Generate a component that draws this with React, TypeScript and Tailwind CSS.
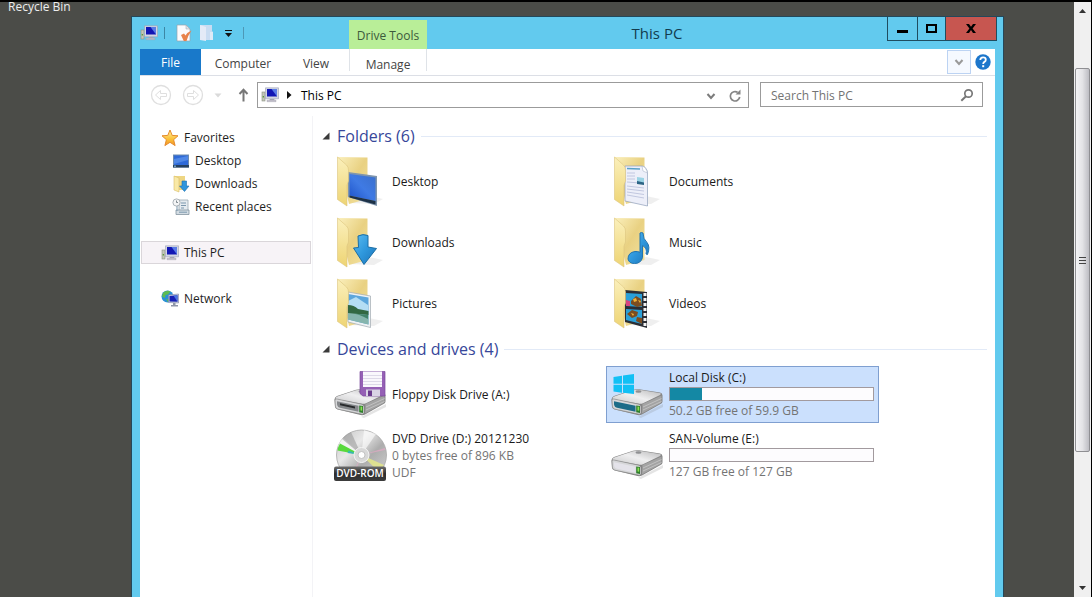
import type { ReactNode } from "react";

type IconName =
  | "desktop"
  | "documents"
  | "downloads"
  | "music"
  | "pictures"
  | "videos"
  | "floppy"
  | "dvd"
  | "system"
  | "disk";

interface Item {
  name: string;
  icon: IconName;
  lines?: string[];
  used?: number;
  selected?: boolean;
}

const folders: Item[] = [
  { name: "Desktop", icon: "desktop" },
  { name: "Documents", icon: "documents" },
  { name: "Downloads", icon: "downloads" },
  { name: "Music", icon: "music" },
  { name: "Pictures", icon: "pictures" },
  { name: "Videos", icon: "videos" },
];

const drives: Item[] = [
  { name: "Floppy Disk Drive (A:)", icon: "floppy" },
  { name: "Local Disk (C:)", icon: "system", used: 16, lines: ["50.2 GB free of 59.9 GB"], selected: true },
  { name: "DVD Drive (D:) 20121230", icon: "dvd", lines: ["0 bytes free of 896 KB", "UDF"] },
  { name: "SAN-Volume (E:)", icon: "disk", used: 0, lines: ["127 GB free of 127 GB"] },
];

function PcIcon() {
  return (
    <svg width="18" height="16" viewBox="0 0 18 16" className="shrink-0" aria-hidden="true">
      <rect x="1" y="5" width="3" height="9" fill="#c3c6b8" stroke="#8b9082" strokeWidth=".6" />
      <rect x="1.7" y="9" width="1.3" height="1.5" fill="#5c9a3e" />
      <path d="M4.500.800h13v11h-13z" fill="#d3d6e2" stroke="#9a9fb4" strokeWidth=".6" />
      <path d="M6 2h10v7.500H6z" fill="#1216b4" />
      <path d="M10.500 2H16v7.500z" fill="#5a7be6" />
      <path d="M9 12h4l1 1.500H8z" fill="#a4a8b5" />
      <path d="M6 13.200h9v1.500H6z" fill="#c7c4cf" stroke="#9a98a6" strokeWidth=".4" />
    </svg>
  );
}

function StarIcon() {
  return (
    <svg width="18" height="18" viewBox="0 0 18 18" className="shrink-0" aria-hidden="true">
      <defs>
        <linearGradient id="star" x1="0" y1="0" x2="0" y2="1">
          <stop offset="0" stopColor="#fff3a0" />
          <stop offset=".6" stopColor="#fbbf35" />
          <stop offset="1" stopColor="#f0912a" />
        </linearGradient>
      </defs>
      <path
        d="M9 1l2.200 5.400 5.800.4-4.400 3.900 1.500 5.900L9 13.300l-5.100 3.300 1.500-5.900L1 6.800l5.800-.4z"
        fill="url(#star)"
        stroke="#e58b2c"
        strokeWidth="1"
        strokeLinejoin="round"
      />
    </svg>
  );
}

function DesktopSmallIcon() {
  return (
    <svg width="18" height="16" viewBox="0 0 18 16" className="shrink-0" aria-hidden="true">
      <rect x="1" y="1.500" width="16" height="13" fill="#6d8bb0" />
      <rect x="2" y="2.500" width="14" height="9.500" fill="#2f6ad8" />
      <path d="M2 11V6l14-3v4z" fill="#5088e6" />
      <rect x="1" y="12" width="16" height="2.500" fill="#26415f" />
      <rect x="2" y="12.600" width="2" height="1.200" fill="#7fb0d8" />
    </svg>
  );
}

function DownloadsSmallIcon() {
  return (
    <svg width="18" height="18" viewBox="0 0 18 18" className="shrink-0" aria-hidden="true">
      <path d="M2 1h11v14H6z" fill="#eed683" />
      <path d="M2 1l5 2v14l-5-2z" fill="#f9e9a6" stroke="#d9bd68" strokeWidth=".6" />
      <path d="M10 6h4.500v5H17l-4.500 5.500L7.500 11H10z" fill="#2f96dc" stroke="#1a6fae" strokeWidth=".6" />
    </svg>
  );
}

function RecentIcon() {
  return (
    <svg width="18" height="18" viewBox="0 0 18 18" className="shrink-0" aria-hidden="true">
      <path d="M7 2h9v11H7z" fill="#e5ebf0" stroke="#9aa8b3" strokeWidth=".8" />
      <path d="M4 12h13v4.500H4z" fill="#d3dce3" stroke="#8494a1" strokeWidth=".8" />
      <path d="M5 6v7M9 5h5M9 7.500h5M9 10h3M7 14.200h8" stroke="#7b97ad" strokeWidth="1" />
      <circle cx="4.500" cy="4.500" r="3.600" fill="#f4f5f6" stroke="#9aa3aa" strokeWidth=".8" />
      <path d="M4.500 2.500v2h1.500" fill="none" stroke="#65717a" strokeWidth=".8" />
    </svg>
  );
}

function NetworkIcon() {
  return (
    <svg width="18" height="18" viewBox="0 0 18 18" className="shrink-0" aria-hidden="true">
      <circle cx="6.500" cy="6.500" r="6" fill="#2a90d6" />
      <path d="M2 3C4 .5 8 .3 9.500 1.500L7 4.500 4.500 5 4 8 1 6.500zM5 9l3 .5-1 2.800z" fill="#5dbb52" />
      <path d="M7.500 5l10-1v9l-10-.5z" fill="#c9cfdf" stroke="#7c85a5" strokeWidth=".6" />
      <path d="M8.500 6l8-.8v6.600l-8-.3z" fill="#1720b4" />
      <path d="M12.500 5.600l4-.4v6.600z" fill="#4a75e0" />
      <path d="M12 13h2.500v2H17v1.500h-7V15h2z" fill="#8f96a8" />
    </svg>
  );
}

function FolderIcon({ children }: { children: ReactNode }) {
  return (
    <>
      <path d="M16 49l24 1 9-5-14-3z" fill="#8c8c8c" opacity=".14" />
      <path d="M3.500 3L33.500 3.500V45L15 50z" fill="url(#folder-back)" />
      {children}
      <path d="M3.500 3L12.500 11q2 2 2 5v11l-1.500 4v21L3.500 45.500z" fill="url(#folder-front)" stroke="#dcc57e" strokeWidth=".6" />
    </>
  );
}

function DriveBody({ face }: { face: string }) {
  return (
    <>
      <path d="M4 42l23 8 25-13v3L30 51z" fill="#777" opacity=".2" />
      <path d="M.500 32.500Q.500 30 3 29L22 22.800q3-1 6-.5L49 25.500q2.500.5 2.500 3v6q0 1.500-2 2.500L31 47.500q-2 1-4.500.5L4 42.500q-3-.8-3-3.500z" fill="#858585" />
      <path d="M1.500 31Q2 29.800 4 29.200L22 23.300q3-1 6-.5l20.500 3.300q2.500.5.500 1.800L32 36.200q-2 1-5 .4L3 32.200q-1.800-.4-1.500-1.200z" fill="url(#metal)" />
      <path d="M31.500 37l19-8.500v6q0 1-1.500 2L31 46.500z" fill="#a3a3a3" />
      <path d="M32 40l18.500-8.500M32 43l18.500-8.500" stroke="#c9c9c9" strokeWidth=".8" />
      <path d="M1 33q0-1.500 2-1l24.500 5.200q2.500.6 2.500 2.600v6q0 1.800-2.500 1.300L4 42.200q-2.500-.6-2.700-3z" fill="#d6d7d9" stroke="#858585" strokeWidth=".6" />
      <path d="M3 34.200l21.500 4.500v6L6 40.800q-3-.8-3-4z" fill={face} />
      <path d="M25.200 38.500l3.800.6v7l-3.800-.8z" fill="#2f7d2c" />
      <path d="M26.500 39.500l1.700.3v4l-1.700-.3z" fill="#8be052" />
      <ellipse cx="27.500" cy="24.500" rx="3" ry="1.200" fill="#8f9092" />
    </>
  );
}

function Artwork({ icon }: { icon: IconName }) {
  switch (icon) {
    case "desktop":
      return (
        <FolderIcon>
          <path d="M14 18l29 4v30L14 43z" fill="#7f95ad" />
          <path d="M15.500 20l26 3.500V47l-26-5.500z" fill="url(#screen)" />
          <path d="M15.500 41.500l26 5.500v3.500l-26-7z" fill="#1d3147" />
        </FolderIcon>
      );
    case "documents":
      return (
        <FolderIcon>
          <path d="M14 12h17q5 1 5.500 7v33L14 47z" fill="#edeff9" stroke="#8f9fba" strokeWidth=".7" />
          <path d="M31 12q4 1 5.500 7l-4.500-2z" fill="#fff" stroke="#9fabc2" strokeWidth=".5" />
          <path d="M16 14.500l13 .5" stroke="#58a0c8" strokeWidth="1.400" />
          <path d="M16 19h8M16 22h8M16 25h8M16 28l10 .8M16 32l17 2M16 35l17 2M16 38l17 2.500M16 41l17 3" stroke="#bcc3dc" strokeWidth=".9" />
          <path d="M26 23l7 1v6l-7-1z" fill="#9bd3e4" />
          <path d="M26 27l7 1.500V31l-7-1z" fill="#2c6485" />
        </FolderIcon>
      );
    case "downloads":
      return (
        <>
          <FolderIcon>{null}</FolderIcon>
          <path
            d="M24 21q5-2.500 10-.5v11.500l8.500 1.500L30 49.500 19.500 33l5-.5z"
            fill="url(#arrow)"
            stroke="#1a6da4"
            strokeWidth="1"
            strokeLinejoin="round"
          />
        </>
      );
    case "music":
      return (
        <>
          <FolderIcon>{null}</FolderIcon>
          <path
            d="M29 18q1.500-1 3 0 0 6 4 9.500 3.500 4 .5 12l-1.500-.5q1.500-6-3.500-8.500v12q-1.500 6-8 6-5.500 0-6.500-4.500 0-6.500 7-7.500 3-.2 5 .8z"
            fill="url(#arrow)"
            stroke="#2374ae"
            strokeWidth="1"
          />
        </>
      );
    case "pictures":
      return (
        <FolderIcon>
          <path d="M14 16l22.500 4v31.500L14 46z" fill="#eef2f4" stroke="#a0a9b0" strokeWidth=".7" />
          <path d="M14 18l20.500 3.500v27L14 43.500z" fill="#5ca6dc" />
          <path d="M14 25l8-4 12 8v7l-20 2z" fill="#b4ddf4" />
          <path d="M14 29q6 0 10 4l10.500 2v4L14 38z" fill="#326842" />
          <path d="M14 37l20.500 2v9.500l-20.500-5z" fill="#86b5ad" />
          <path d="M14 37q10 0 20 6v-4z" fill="#41836a" />
        </FolderIcon>
      );
    case "videos":
      return (
        <FolderIcon>
          <path d="M14 14l22 2v36L14 46z" fill="#2b2e35" />
          <path d="M15 17l16 1v13l-16-1zM15 33l16 1v14l-16-4z" fill="#2aa0d8" />
          <path d="M15 24l4 1v5h-4z" fill="#d64580" />
          <path d="M20 25l5-5 5 3 1 7-5 1-6-3zM16 38l5-4 6 2-1 4-5 2zM26 41l5 1v6l-6-3z" fill="#7c4d20" />
          <path d="M22 23l3-1 1 3-3 1zM20 37l3 1-1 2zM27 24l3 1-1 2z" fill="#f0b338" />
          <path d="M34 17v34" stroke="#f2f2f2" strokeWidth="3" strokeDasharray="3 2" />
        </FolderIcon>
      );
    case "floppy":
      return (
        <>
          <DriveBody face="#85888b" />
          <path d="M6 36.300l15 3.200v2L6 38.300z" fill="#292b2d" />
          <path d="M26 4.500h25V29H29l-3-2.500z" fill="#9560b5" stroke="#7a479c" strokeWidth=".7" />
          <path d="M29 4.500h19v15.500H29z" fill="#f9f7fc" />
          <path d="M29 8.500h19M29 11.500h19M29 14.500h19M29 17.500h19" stroke="#d6d0e2" strokeWidth=".8" />
          <path d="M32 22.500h14V29H32z" fill="#d9d4e4" />
          <path d="M34 23.500h4V29h-4z" fill="#6b3c8d" />
        </>
      );
    case "dvd":
      return (
        <>
          <circle cx="27.500" cy="27" r="25" fill="url(#disc)" stroke="#a8a8a8" strokeWidth=".8" />
          <path d="M27.500 27L4 19q1-5 5-9z" fill="#f3f3f3" />
          <path d="M27.500 27L3.500 22.500q.5-4 2.500-7z" fill="#58d93c" />
          <path d="M27.500 27l-13-4.500-1 2.500z" fill="#35b9b0" />
          <path d="M27.500 27L8 11q4-5 9-7z" fill="#8e8e8e" opacity=".5" />
          <path d="M27.500 27L45 44l5-7z" fill="#e4e88a" opacity=".85" />
          <path d="M27.500 27L51 20v2zM27.500 27L17 49l2 1z" fill="#e2a8c4" opacity=".7" />
          <path d="M27.500 27L30 2l12 4z" fill="#fff" opacity=".6" />
          <circle cx="27.500" cy="27" r="7.500" fill="#d8d8d8" stroke="#f5f5f5" strokeWidth="1" />
          <circle cx="27.500" cy="27" r="3.500" fill="#fff" stroke="#b6b6b6" strokeWidth=".8" />
          <rect x="0" y="38.500" width="52" height="14.500" rx="2" fill="url(#dvd-label)" />
          <text x="26" y="49" textAnchor="middle" fill="#fff" fontSize="10" fontWeight="600" fontFamily="Open Sans, sans-serif">
            DVD-ROM
          </text>
        </>
      );
    case "system":
      return (
        <>
          <DriveBody face="#1c6c88" />
          <path d="M2.500 10l8.500-1.300v8H2.500zM12 8.500l11-1.500v9.700H12zM2.500 17.700H11v8l-8.500-1.300zM12 17.700h11V27l-11-1.300z" fill="#12c0f5" />
        </>
      );
    case "disk":
      return <DriveBody face="#e4e3ea" />;
  }
}

function ItemIcon({ icon }: { icon: IconName }) {
  return (
    <svg width="54" height="55" viewBox="0 0 54 55" className="shrink-0" aria-hidden="true">
      <Artwork icon={icon} />
    </svg>
  );
}

// gradients shared by every large icon
function IconDefs() {
  return (
    <svg width="0" height="0" className="absolute" aria-hidden="true">
      <defs>
        <linearGradient id="folder-back" x1="0" y1="0" x2="1" y2="1">
          <stop offset="0" stopColor="#fbf0bd" />
          <stop offset=".5" stopColor="#e9d182" />
          <stop offset="1" stopColor="#f3e2a0" />
        </linearGradient>
        <linearGradient id="folder-front" x1="0" y1="0" x2="0" y2="1">
          <stop offset="0" stopColor="#fbf0bc" />
          <stop offset="1" stopColor="#eed473" />
        </linearGradient>
        <linearGradient id="screen" x1="0" y1="1" x2="1" y2="0">
          <stop offset="0" stopColor="#1c51c8" />
          <stop offset=".5" stopColor="#3f7ae4" />
          <stop offset="1" stopColor="#3a6fcb" />
        </linearGradient>
        <linearGradient id="arrow" x1="0" y1="0" x2="1" y2="1">
          <stop offset="0" stopColor="#5cbdf0" />
          <stop offset=".5" stopColor="#2f98dd" />
          <stop offset="1" stopColor="#1b73b8" />
        </linearGradient>
        <linearGradient id="metal" x1="0" y1="1" x2="1" y2="0">
          <stop offset="0" stopColor="#c9c9ca" />
          <stop offset=".5" stopColor="#efeff0" />
          <stop offset="1" stopColor="#b8b8b9" />
        </linearGradient>
        <linearGradient id="disc" x1="0" y1="0" x2="1" y2="1">
          <stop offset="0" stopColor="#c2c2c2" />
          <stop offset=".35" stopColor="#e8e8e8" />
          <stop offset=".6" stopColor="#adadad" />
          <stop offset="1" stopColor="#d5d5d5" />
        </linearGradient>
        <linearGradient id="dvd-label" x1="0" y1="0" x2="0" y2="1">
          <stop offset="0" stopColor="#6d6d6d" />
          <stop offset=".5" stopColor="#2d2d2d" />
          <stop offset="1" stopColor="#3c3c3c" />
        </linearGradient>
      </defs>
    </svg>
  );
}

function TitleBar() {
  return (
    <header className="flex h-8 items-start bg-[#62caee] pr-[6px] pl-2">
      <div className="flex h-8 w-[209px] items-center">
        <PcIcon />
        <span className="ml-[6px] h-3 w-px bg-[#3c87a5]" />
        <button type="button" aria-label="Properties" className="ml-[10px]">
          <svg width="18" height="18" viewBox="0 0 18 18" aria-hidden="true">
            <path d="M2 1h9l4 4v12H2z" fill="#fbfbfd" stroke="#9aa3ad" strokeWidth=".7" />
            <path d="M11 1v4h4z" fill="#dfe5ea" stroke="#9aa3ad" strokeWidth=".5" />
            <path d="M6 11l3-1.500 1.500 2Q12 8.500 16.500 6.500q-3.500 5-5 10.500H8.800z" fill="#e8834c" />
          </svg>
        </button>
        <button type="button" aria-label="New folder" className="ml-[6px]">
          <svg width="16" height="18" viewBox="0 0 16 18" aria-hidden="true">
            <path d="M1 1h12v6l1 1v8H1z" fill="#c9dcf2" />
            <path d="M1 1l6 2v14l-6-1z" fill="#e4eaf7" />
            <path d="M11 8h3v8h-3z" fill="#dfeaf6" />
          </svg>
        </button>
        <button type="button" aria-label="Customize Quick Access Toolbar" className="ml-[9px] pt-px">
          <svg width="9" height="8" viewBox="0 0 9 8" aria-hidden="true">
            <path d="M1 0h7v1H1zM1 3h7L4.500 7z" fill="#111" />
          </svg>
        </button>
        <span className="ml-[10px] h-3 w-px bg-[#4d98b6]" />
      </div>
      <div className="mt-[3px] flex h-[29px] w-[78px] items-center justify-center bg-[#b9ee98] pt-0.5 text-[#3c5a3c]">
        Drive Tools
      </div>
      <h1 className="flex-1 pt-1 text-center text-[15px] leading-6 text-[#123c4e]">This PC</h1>
      <div className="flex h-6 border-x border-b border-[#1f4d60]">
        <button type="button" aria-label="Minimize" className="flex w-[30px] items-center justify-center border-r border-[#1f4d60]">
          <svg width="11" height="12" viewBox="0 0 11 12" aria-hidden="true">
            <path d="M0 7h11v3H0z" fill="#000" />
          </svg>
        </button>
        <button type="button" aria-label="Maximize" className="flex w-7 items-center justify-center border-r border-[#1f4d60]">
          <svg width="11" height="10" viewBox="0 0 11 10" aria-hidden="true">
            <path d="M1 1h9v7H1z" fill="none" stroke="#000" strokeWidth="2" />
          </svg>
        </button>
        <button type="button" aria-label="Close" className="flex w-[50px] items-center justify-center bg-[#c75650]">
          <svg width="10" height="10" viewBox="0 0 10 10" aria-hidden="true">
            <path d="M0 0h3l2 2.800L7 0h3L6.600 4.400 10 9H7L5 6.100 3 9H0l3.400-4.600z" fill="#000" />
          </svg>
        </button>
      </div>
    </header>
  );
}

function Ribbon() {
  return (
    <div className="flex h-[27px] border-b border-[#dcdfe6] bg-white pr-1 text-[#444]">
      <button type="button" className="h-[26px] w-[61px] bg-[#1979ca] pt-0.5 text-white">
        File
      </button>
      <button type="button" className="w-[84px] pt-1">
        Computer
      </button>
      <button type="button" className="w-[62px] pt-1">
        View
      </button>
      <button type="button" className="mr-auto ml-0.5 h-[22px] w-[78px] border-x border-[#dfe3e8] pt-2">
        Manage
      </button>
      <button type="button" aria-label="Expand the Ribbon" className="mt-px flex h-6 w-6 items-center justify-center border border-[#bcd3f3] bg-[#f5f9ff]">
        <Chevron color="#9a9a9a" />
      </button>
      <button type="button" aria-label="Help" className="ml-1 flex h-[25px] items-center">
        <svg width="16" height="16" viewBox="0 0 16 16" aria-hidden="true">
          <circle cx="8" cy="8" r="7.700" fill="#1c76cb" />
          <path d="M5.300 6q0-2.600 2.800-2.600 2.700 0 2.700 2.300 0 1.300-1.400 2.200-1.200.7-1.200 2" fill="none" stroke="#fff" strokeWidth="1.800" />
          <rect x="7.200" y="11.200" width="2" height="2" fill="#fff" />
        </svg>
      </button>
    </div>
  );
}

function Chevron({ color }: { color: string }) {
  return (
    <svg width="10" height="8" viewBox="0 0 10 8" aria-hidden="true">
      <path d="M1.500 2L5 6l3.500-4" fill="none" stroke={color} strokeWidth="2" />
    </svg>
  );
}

function AddressBar() {
  return (
    <div className="flex h-10 items-start bg-white pt-[6px] pr-3 pl-[10px]">
      <div className="flex h-[26px] w-[107px] items-center">
        <button type="button" aria-label="Back">
          <svg width="22" height="22" viewBox="0 0 22 22" fill="none" stroke="#dfdfdf" aria-hidden="true">
            <circle cx="11" cy="11" r="9.500" strokeWidth="1.300" />
            <path d="M5.500 11l5-4.500v3h6v3h-6v3z" />
          </svg>
        </button>
        <button type="button" aria-label="Forward" className="ml-[10px]">
          <svg width="22" height="22" viewBox="0 0 22 22" fill="none" stroke="#dfdfdf" aria-hidden="true">
            <circle cx="11" cy="11" r="9.500" strokeWidth="1.300" />
            <path d="M16.500 11l-5-4.500v3h-6v3h6v3z" />
          </svg>
        </button>
        <button type="button" aria-label="Recent locations" className="ml-[10px]">
          <svg width="8" height="5" viewBox="0 0 8 5" aria-hidden="true">
            <path d="M.500.500h7L4 4.500z" fill="#dadada" />
          </svg>
        </button>
        <button type="button" aria-label="Up" className="ml-4">
          <svg width="11" height="14" viewBox="0 0 11 14" aria-hidden="true">
            <path d="M5.500 13.500V2M1.500 6l4-4.200L9.500 6" fill="none" stroke="#777" strokeWidth="2" />
          </svg>
        </button>
      </div>
      <nav aria-label="Address" className="flex h-[26px] flex-1 items-center border border-[#9b9b9b] pr-[6px] pl-[3px]">
        <PcIcon />
        <svg width="6" height="8" viewBox="0 0 6 8" className="ml-[7px]" aria-hidden="true">
          <path d="M1 0l4.500 4L1 8z" fill="#111" />
        </svg>
        <a href="#this-pc" className="mr-auto ml-[9px] pt-px text-black">
          This PC
        </a>
        <button type="button" aria-label="Previous locations" className="pt-0.5">
          <Chevron color="#7c7c7c" />
        </button>
        <button type="button" aria-label="Refresh" className="ml-3 pt-0.5">
          <svg width="14" height="14" viewBox="0 0 14 14" aria-hidden="true">
            <path d="M11.700 8a4.700 4.700 0 1 1-2-4.600" fill="none" stroke="#858585" strokeWidth="1.700" />
            <path d="M7.500 5.500h5V.5z" fill="#858585" />
          </svg>
        </button>
      </nav>
      <label className="ml-[11px] flex h-[25px] w-[223px] items-center border border-[#9b9b9b] pr-2 pl-[10px]">
        <input
          type="text"
          aria-label="Search This PC"
          placeholder="Search This PC"
          className="min-w-0 flex-1 pt-0.5 outline-none placeholder:text-[#737373]"
        />
        <svg width="14" height="14" viewBox="0 0 14 14" aria-hidden="true">
          <circle cx="8.500" cy="5.500" r="3.700" fill="none" stroke="#777" strokeWidth="1.700" />
          <path d="M6 8.300L1.300 12.700" stroke="#777" strokeWidth="2" />
        </svg>
      </label>
    </div>
  );
}

function Sidebar() {
  return (
    <nav aria-label="Navigation pane" className="w-[173px] shrink-0 border-r border-[#f3f3f6] px-px pt-[10px] text-[#1e1e1e]">
      <ul>
        <SidebarLink label="Favorites" icon={<StarIcon />} />
        <SidebarLink label="Desktop" icon={<DesktopSmallIcon />} nested />
        <SidebarLink label="Downloads" icon={<DownloadsSmallIcon />} nested />
        <SidebarLink label="Recent places" icon={<RecentIcon />} nested />
      </ul>
      <ul className="mt-[23px]">
        <SidebarLink label="This PC" icon={<PcIcon />} active />
      </ul>
      <ul className="mt-[23px]">
        <SidebarLink label="Network" icon={<NetworkIcon />} />
      </ul>
    </nav>
  );
}

interface SidebarLinkProps {
  label: string;
  icon: ReactNode;
  nested?: boolean;
  active?: boolean;
}

function SidebarLink({ label, icon, nested, active }: SidebarLinkProps) {
  return (
    <li>
      <a
        href="#"
        className={`flex h-[23px] items-center gap-[5px] border ${nested ? "pl-[30px]" : "pl-[19px]"} ${
          active ? "border-[#dad6da] bg-[#f7f3f7]" : "border-transparent"
        }`}
      >
        {icon}
        {label}
      </a>
    </li>
  );
}

function Section({ title, items }: { title: string; items: Item[] }) {
  return (
    <section>
      <div className="flex h-[34px] items-center pl-[9px]">
        <svg width="8" height="8" viewBox="0 0 8 8" aria-hidden="true">
          <path d="M7.500.500v7h-7z" fill="#3a3a3a" />
        </svg>
        <h2 className="ml-[7px] text-base text-[#37479a]">{title}</h2>
        <span className="mr-2 ml-[6px] h-px flex-1 bg-[#e2eaf7]" />
      </div>
      <ul className="grid grid-cols-[repeat(auto-fill,273px)] gap-1 pl-4">
        {items.map((item) => (
          <ItemTile key={item.name} item={item} />
        ))}
      </ul>
    </section>
  );
}

function ItemTile({ item }: { item: Item }) {
  const hasBar = item.used !== undefined;

  return (
    <li
      className={`flex h-[57px] items-center border pr-1 pl-1 ${
        item.selected ? "border-[#7f9fd0] bg-[#cbe0fd]" : "border-transparent"
      }`}
    >
      <ItemIcon icon={item.icon} />
      <div className={`ml-1 flex-1 leading-[17px] ${hasBar ? "pb-0.5" : ""}`}>
        <p className="text-[#1a1a1a]">{item.name}</p>
        {hasBar && (
          <div
            role="progressbar"
            aria-label={`${item.name} used space`}
            aria-valuenow={item.used}
            className="my-px h-[14px] border border-[#a29a9e] bg-[#fdfcfe]"
          >
            <div className="h-full bg-[#1488a4]" style={{ width: `${item.used}%` }} />
          </div>
        )}
        {item.lines?.map((line) => (
          <p key={line} className="text-[#747474]">
            {line}
          </p>
        ))}
      </div>
    </li>
  );
}

function ScrollBar() {
  return (
    <div className="flex w-[17px] shrink-0 flex-col items-center bg-[#f0f0f0]">
      <button type="button" aria-label="Scroll up" className="flex h-[18px] items-center">
        <svg width="7" height="4" viewBox="0 0 7 4" aria-hidden="true">
          <path d="M3.500 0L7 4H0z" fill="#333" />
        </svg>
      </button>
      <div className="w-full flex-1 px-px pt-12 pb-[127px]">
        <div className="flex h-full flex-col items-center justify-center gap-[2px] rounded-xs border border-[#8f8f93] bg-linear-to-r from-[#f4f4f5] via-[#e3e3e6] to-[#bdbdc3]">
          <span className="h-px w-[7px] bg-[#444]" />
          <span className="h-px w-[7px] bg-[#444]" />
          <span className="h-px w-[7px] bg-[#444]" />
        </div>
      </div>
      <button type="button" aria-label="Scroll down" className="flex h-[18px] items-center">
        <svg width="7" height="4" viewBox="0 0 7 4" aria-hidden="true">
          <path d="M0 0h7L3.500 4z" fill="#333" />
        </svg>
      </button>
    </div>
  );
}

export default function App() {
  return (
    <div className="flex h-screen overflow-hidden border-t-2 border-r border-black bg-[#4b4c48] font-['Open_Sans',sans-serif] text-xs">
      <IconDefs />
      <div className="relative flex-1 overflow-hidden">
        <span className="absolute top-0 left-2 leading-[10px] text-[#ededed]">Recycle Bin</span>
        <div className="absolute top-[14px] right-[70px] bottom-0 left-[131px] flex flex-col border-x border-t border-[#24485a] bg-[#62caee]">
          <TitleBar />
          <div className="mr-2 ml-2 flex flex-1 flex-col bg-white">
            <Ribbon />
            <AddressBar />
            <div className="flex flex-1">
              <Sidebar />
              <main className="flex-1 pt-[3px]">
                <Section title="Folders (6)" items={folders} />
                <Section title="Devices and drives (4)" items={drives} />
              </main>
            </div>
          </div>
        </div>
      </div>
      <ScrollBar />
    </div>
  );
}
